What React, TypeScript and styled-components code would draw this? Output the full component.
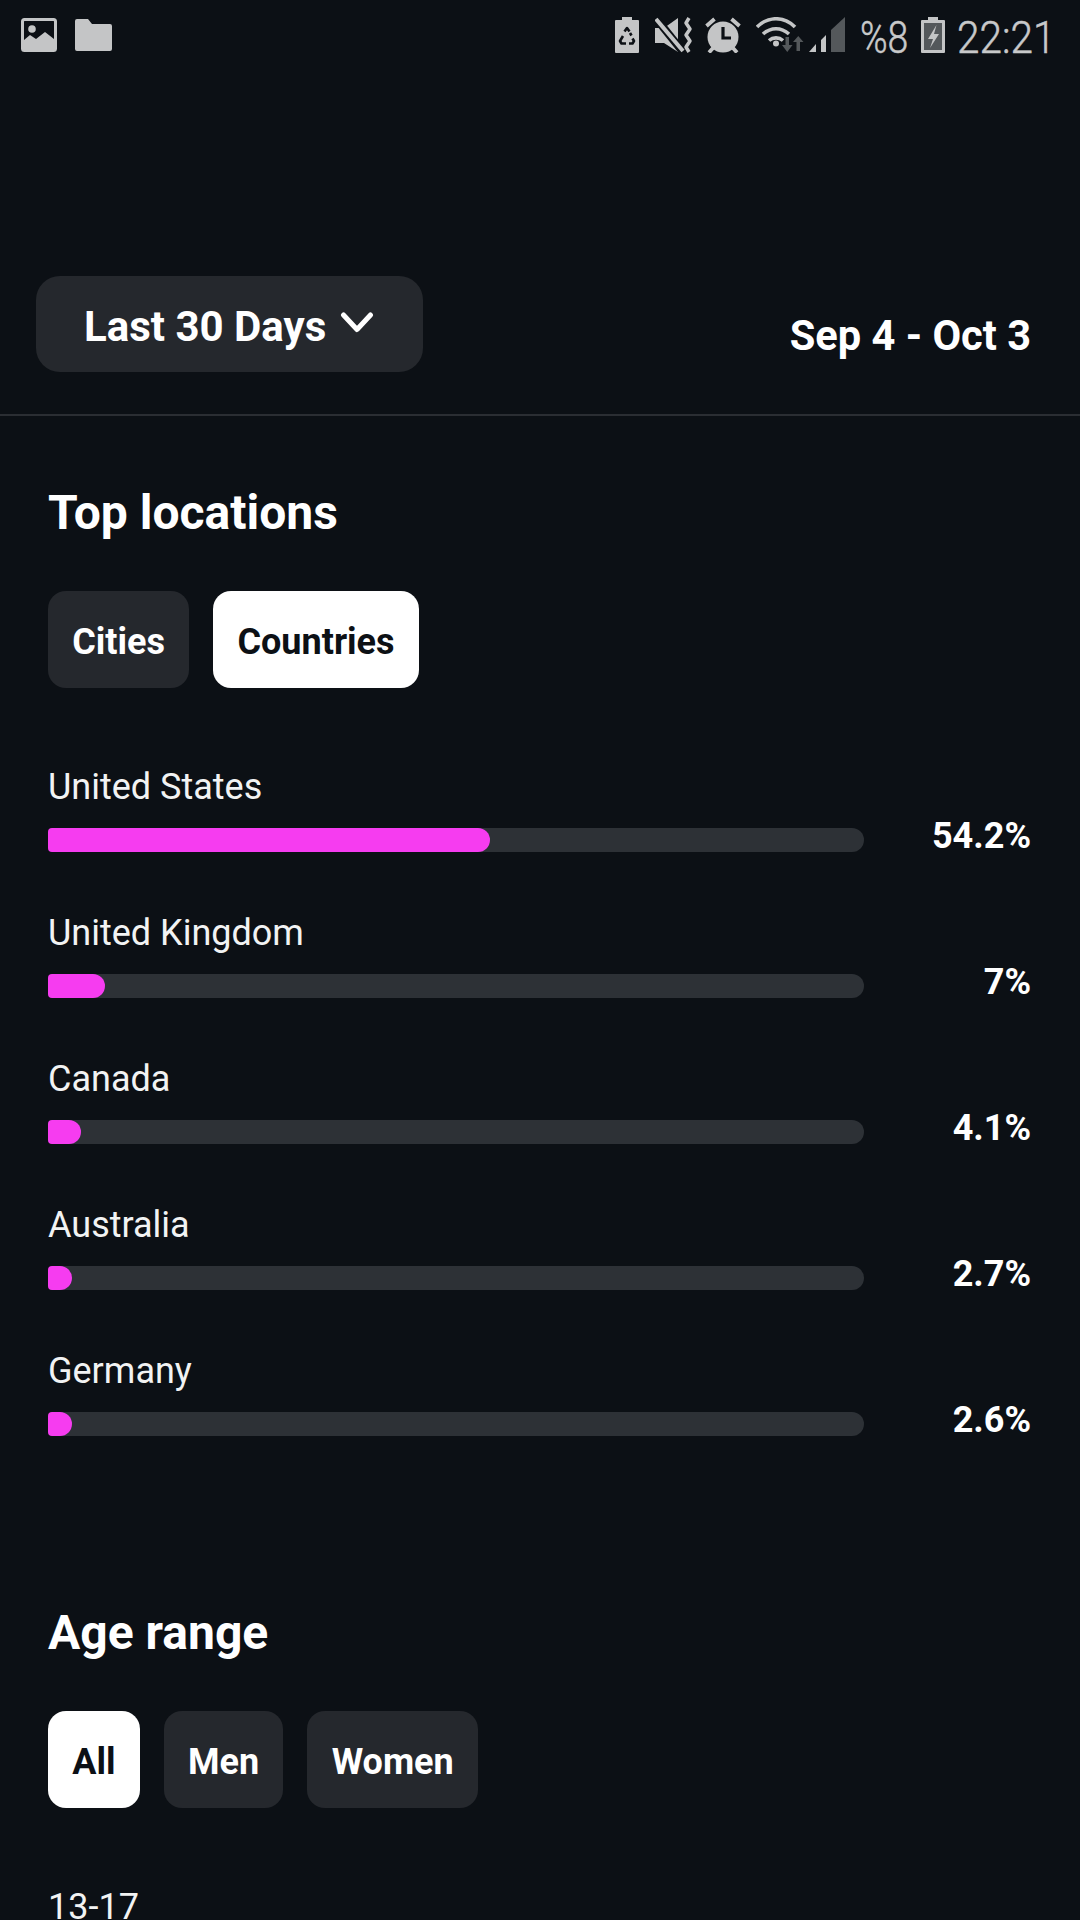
import React from "react";
import styled, { createGlobalStyle } from "styled-components";

const Global = createGlobalStyle`
  html, body { margin: 0; padding: 0; background: #0c1015; }
  body { font-family: Roboto, "Liberation Sans", sans-serif; }
`;

const Page = styled.div`
  width: 1080px;
  height: 1920px;
  overflow: hidden;
  background: #0c1015;
  color: #fff;
`;

const StatusBar = styled.div`
  height: 70px;
  display: flex;
  align-items: center;
  justify-content: space-between;
  padding: 0 27px 0 21px;
  color: #c4c5c6;
`;

const StatusGroup = styled.div`
  display: flex;
  align-items: center;
`;

const StatusText = styled.span<{ $ml: number; $w: number; $sx: number }>`
  display: block;
  flex: none;
  width: ${(p) => p.$w}px;
  margin-left: ${(p) => p.$ml}px;
  padding-top: 5px;
  font-size: 45px;
  font-weight: 300;
  line-height: 70px;
  color: #c8c9ca;
  -webkit-text-stroke: 0.5px #c8c9ca;
  white-space: nowrap;
  transform: scaleX(${(p) => p.$sx});
  transform-origin: left center;
`;

const Icon = styled.svg<{ $ml?: number }>`
  display: block;
  flex: none;
  margin-left: ${(p) => p.$ml ?? 0}px;
`;

const RangeRow = styled.div`
  display: flex;
  justify-content: space-between;
  align-items: flex-end;
  padding: 206px 49px 0 36px;
`;

const RangeButton = styled.div`
  width: 387px;
  height: 96px;
  box-sizing: border-box;
  border-radius: 24px;
  background: #25282d;
  display: flex;
  align-items: center;
  padding: 4px 0 0 48px;
  gap: 14px;
  font-size: 42px;
  font-weight: 700;
`;

const Chevron = styled.svg`
  display: block;
  flex: none;
  margin-top: -6px;
`;

const DateText = styled.div`
  font-size: 41.6px;
  font-weight: 700;
  line-height: 47px;
  margin-bottom: 13px;
`;

const Divider = styled.div`
  height: 2px;
  background: #2b2e33;
  margin-top: 42px;
`;

const Section = styled.section<{ $top: number }>`
  padding: ${(p) => p.$top}px 49px 0 48px;
`;

const Heading = styled.h2`
  margin: 0;
  font-size: 48px;
  line-height: 54px;
  font-weight: 700;
`;

const Tabs = styled.div`
  display: flex;
  gap: 24px;
  margin-top: 51px;
`;

const Tab = styled.div<{ $active?: boolean }>`
  height: 97px;
  box-sizing: border-box;
  padding: 4px 24.25px 0;
  border-radius: 18px;
  display: flex;
  align-items: center;
  font-size: 36px;
  font-weight: 700;
  background: ${(p) => (p.$active ? "#fff" : "#25282d")};
  color: ${(p) => (p.$active ? "#0c1015" : "#fff")};
`;

const Rows = styled.div`
  display: flex;
  flex-direction: column;
  gap: 32px;
  margin-top: 78px;
`;

const Row = styled.div`
  display: grid;
  grid-template-columns: 816px 1fr;
  grid-template-rows: 42px 24px;
  row-gap: 20px;
  height: 114px;
`;

const Label = styled.div`
  grid-column: 1 / 3;
  font-size: 36px;
  line-height: 42px;
  font-weight: 400;
  color: #f2f3f3;
`;

const Track = styled.div`
  height: 24px;
  border-radius: 12px;
  background: #2d3136;
`;

const Fill = styled.div`
  height: 100%;
  min-width: 24px;
  background: #f63cf0;
  border-radius: 4px 12px 12px 4px;
`;

const Percent = styled.div`
  font-size: 36px;
  line-height: 24px;
  font-weight: 700;
  text-align: right;
  white-space: nowrap;
  margin-top: -4px;
`;

const countries = [
  { name: "United States", value: 54.2 },
  { name: "United Kingdom", value: 7 },
  { name: "Canada", value: 4.1 },
  { name: "Australia", value: 2.7 },
  { name: "Germany", value: 2.6 },
];

const GREY = "#c4c5c6";
const DARK = "#54585b";
const BG = "#0c1015";

export default function App() {
  return (
    <Page>
      <Global />
      <StatusBar>
        <StatusGroup>
          <Icon width="36" height="34" viewBox="0 0 36 34">
            <rect x="1.5" y="1.5" width="33" height="31" rx="2" fill="none" stroke={GREY} strokeWidth="3" />
            <circle cx="11" cy="11" r="3.8" fill={GREY} />
            <path d="M3 22l6-5 6 4 9-7 9 7v10H3z" fill={GREY} />
          </Icon>
          <Icon $ml={18} width="37" height="32" viewBox="0 0 37 32">
            <path d="M0 2a2 2 0 0 1 2-2h11l4 5h18a2 2 0 0 1 2 2v23a2 2 0 0 1-2 2H2a2 2 0 0 1-2-2z" fill={GREY} />
          </Icon>
        </StatusGroup>
        <StatusGroup>
          <Icon width="24" height="36" viewBox="0 0 24 36">
            <path d="M7 0h10v3h6a1 1 0 0 1 1 1v31a1 1 0 0 1-1 1H1a1 1 0 0 1-1-1V4a1 1 0 0 1 1-1h6z" fill={GREY} />
            <path d="M9.500 14.500L12 11l2.500 3.500M15 16l1.500 2.500M8 19l-3 5 1.500 2.500H11M14 26.500h3.500L19 24l-1.500-2.500" fill="none" stroke={BG} strokeWidth="2.600" strokeLinejoin="round" />
          </Icon>
          <Icon $ml={16} width="38" height="36" viewBox="0 0 38 36">
            <path d="M0 11h9L23 1v34L9 26H0z" fill={GREY} />
            <path d="M0 0l28 35" stroke={BG} strokeWidth="8" />
            <path d="M1 2l27 32" stroke={GREY} strokeWidth="4" />
            <path d="M34 1l-3 5 4 6-4 6 4 6-4 6 3 5" fill="none" stroke={GREY} strokeWidth="3.500" strokeLinejoin="round" />
          </Icon>
          <Icon $ml={12} width="36" height="36" viewBox="0 0 36 36">
            <circle cx="18" cy="20" r="15.500" fill={GREY} />
            <path d="M18 10v11h8" fill="none" stroke={BG} strokeWidth="3.200" />
            <path d="M1.500 9l8-7M34.500 9l-8-7M8 31l-4 4.500M28 31l4 4.500" stroke={GREY} strokeWidth="3.800" />
          </Icon>
          <Icon $ml={15} width="48" height="36" viewBox="0 0 48 36">
            <path d="M1 10c11-11 27-11 38 0M7 17c8-7 18-7 26 0M13 23.500c4-3.500 10-3.500 14 0" fill="none" stroke={GREY} strokeWidth="3.600" />
            <circle cx="20" cy="26.500" r="3" fill={GREY} />
            <path d="M29.500 20h3.500v8h3.500L31.250 35 26 28h3.500zM40.500 34h3.500v-9h3.500L42.250 19 37 25h3.500z" fill={DARK} />
          </Icon>
          <Icon $ml={5} width="36" height="36" viewBox="0 0 36 36">
            <path d="M0 35l7-8v8zM12 23l5-5v17h-5z" fill={GREY} />
            <path d="M22 13L36 0v35H22z" fill={DARK} />
          </Icon>
          <StatusText $ml={15} $w={46} $sx={0.83}>%8</StatusText>
          <Icon $ml={15} width="24" height="36" viewBox="0 0 24 36">
            <path d="M7 0h10v3h6a1 1 0 0 1 1 1v31a1 1 0 0 1-1 1H1a1 1 0 0 1-1-1V4a1 1 0 0 1 1-1h6z" fill={GREY} />
            <rect x="3" y="6" width="18" height="27" fill={DARK} />
            <path d="M15.500 8L7 22h5l-3 9 9-14h-5z" fill={GREY} />
          </Icon>
          <StatusText $ml={12} $w={96} $sx={0.9}>22:21</StatusText>
        </StatusGroup>
      </StatusBar>

      <RangeRow>
        <RangeButton>
          Last 30 Days
          <Chevron width="34" height="24" viewBox="0 0 34 24">
            <path d="M3.500 4L17 18.500 30.500 4" fill="none" stroke="#fff" strokeWidth="5" strokeLinecap="round" strokeLinejoin="round" />
          </Chevron>
        </RangeButton>
        <DateText>Sep 4 - Oct 3</DateText>
      </RangeRow>
      <Divider />

      <Section $top={70}>
        <Heading>Top locations</Heading>
        <Tabs>
          <Tab>Cities</Tab>
          <Tab $active>Countries</Tab>
        </Tabs>
        <Rows>
          {countries.map((c) => (
            <Row key={c.name}>
              <Label>{c.name}</Label>
              <Track>
                <Fill style={{ width: `${c.value}%` }} />
              </Track>
              <Percent>{c.value}%</Percent>
            </Row>
          ))}
        </Rows>
      </Section>

      <Section $top={142}>
        <Heading>Age range</Heading>
        <Tabs>
          <Tab $active>All</Tab>
          <Tab>Men</Tab>
          <Tab>Women</Tab>
        </Tabs>
        <Rows>
          <Row>
            <Label>13-17</Label>
          </Row>
        </Rows>
      </Section>
    </Page>
  );
}
